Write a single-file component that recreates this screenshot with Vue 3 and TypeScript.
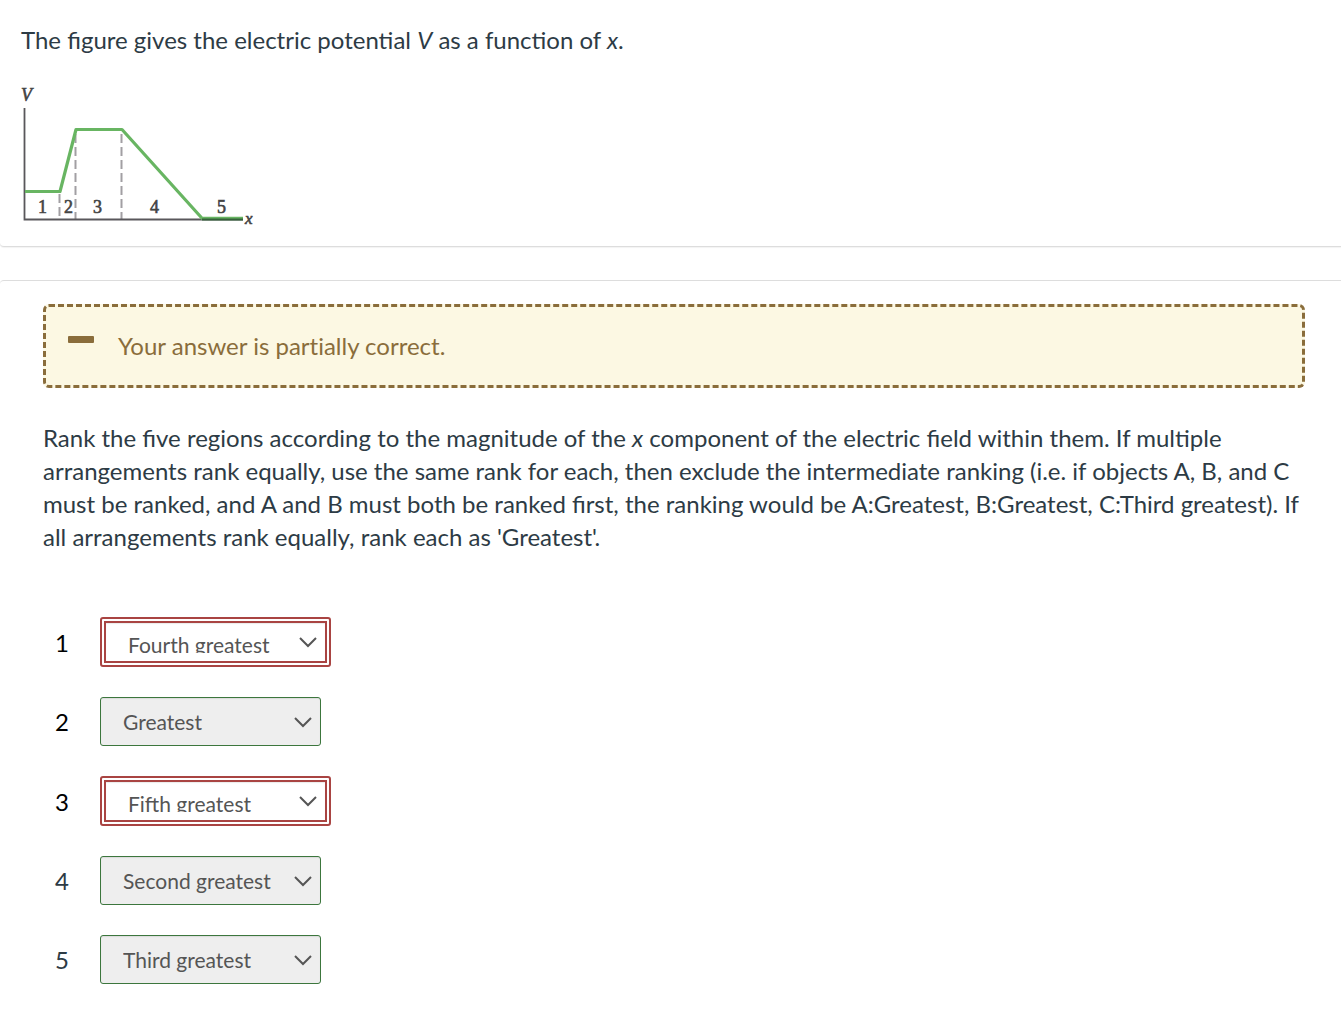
<script setup lang="ts">
import { ref } from 'vue'

interface Region {
  id: number
  rank: string
  correct: boolean
  strong: boolean
}

const ranks: string[] = [
  'Greatest',
  'Second greatest',
  'Third greatest',
  'Fourth greatest',
  'Fifth greatest',
]

const regions = ref<Region[]>([
  { id: 1, rank: 'Fourth greatest', correct: false, strong: true },
  { id: 2, rank: 'Greatest', correct: true, strong: true },
  { id: 3, rank: 'Fifth greatest', correct: false, strong: true },
  { id: 4, rank: 'Second greatest', correct: true, strong: false },
  { id: 5, rank: 'Third greatest', correct: true, strong: false },
])
</script>

<template>
  <main class="question">
    <section class="card stem">
      <p>The figure gives the electric potential <em>V</em> as a function of <em>x</em>.</p>
      <svg class="graph" width="240" height="144" viewBox="0 0 240 144" role="img" aria-label="Graph of V against x">
        <g class="divider">
          <path d="M38.500 110V135" />
          <path d="M54.500 50V135" />
          <path d="M100.500 50V135" />
        </g>
        <path class="axis" d="M3.500 24V135.500H222" />
        <path class="curve" d="M4 107.500H39L55 45.500H101L181 134.300H222" />
        <path class="axis faint" d="M181 135.500H222" />
        <g class="label">
          <text class="var" x="0" y="17">V</text>
          <text x="17" y="129">1</text>
          <text x="43" y="129">2</text>
          <text x="72" y="129">3</text>
          <text x="129" y="129">4</text>
          <text x="196" y="129">5</text>
          <text class="var small" x="224" y="140">x</text>
        </g>
      </svg>
    </section>

    <section class="card answer">
      <div class="notice" role="status">
        <span class="dash" aria-hidden="true"></span>
        <span>Your answer is partially correct.</span>
      </div>
      <p class="prompt">
        Rank the five regions according to the magnitude of the <em>x</em> component of the electric
        field within them. If multiple arrangements rank equally, use the same rank for each, then
        exclude the intermediate ranking (i.e. if objects A, B, and C must be ranked, and A and B
        must both be ranked first, the ranking would be A:Greatest, B:Greatest, C:Third greatest).
        If all arrangements rank equally, rank each as 'Greatest'.
      </p>
      <div class="rows">
        <div v-for="region in regions" :key="region.id" class="row">
          <label :for="`region-${region.id}`" :class="{ strong: region.strong }">{{ region.id }}</label>
          <select
            :id="`region-${region.id}`"
            v-model="region.rank"
            :class="region.correct ? 'right' : 'wrong'"
            :disabled="region.correct"
          >
            <option v-for="rank in ranks" :key="rank" :value="rank">{{ rank }}</option>
          </select>
        </div>
      </div>
    </section>
  </main>
</template>

<style>
body {
  margin: 0;
  background: #fff;
}
</style>

<style scoped>
.question {
  color: #2d3b45;
  font-family: Lato, "Liberation Sans", sans-serif;
  font-size: 24px;
  line-height: 33px;
}

p {
  margin: 0;
}

.card {
  background: #fff;
}

.stem {
  padding: 23px 21px 18px;
  border-bottom: 1px solid #ddd;
  border-radius: 0 0 0 4px;
  box-shadow: 0 1px 1px rgba(0, 0, 0, 0.05);
}

.graph {
  display: block;
  margin-top: 28px;
}

.axis {
  fill: none;
  stroke: #59575b;
  stroke-width: 1.8;
}

.faint {
  stroke: #35623a;
}

.curve {
  fill: none;
  stroke: #68b562;
  stroke-width: 3.2;
  stroke-linejoin: round;
}

.divider {
  fill: none;
  stroke: #a29fa3;
  stroke-width: 2;
  stroke-dasharray: 9 4;
}

.label {
  fill: #444;
  stroke: #444;
  stroke-width: 0.6;
  font-family: "Liberation Serif", serif;
  font-size: 18px;
}

.var {
  font-style: italic;
}

.small {
  font-size: 17px;
}

.answer {
  margin-top: 33px;
  padding: 23px 36px 38px 43px;
  border-top: 1px solid #ddd;
  border-radius: 4px 0 0 0;
}

.notice {
  display: flex;
  align-items: center;
  gap: 24px;
  box-sizing: border-box;
  min-height: 84px;
  padding: 0 22px 2px;
  border: 3px dashed #8a6d3b;
  border-radius: 6px;
  background: #fcf8e3;
  color: #8a6d3b;
  font-variant-ligatures: none;
}

.dash {
  width: 26px;
  height: 7px;
  margin-bottom: 12px;
  border-radius: 1px;
  background: #8a6d3b;
}

.prompt {
  margin-top: 33px;
}

.rows {
  display: flex;
  flex-direction: column;
  gap: 30px;
  margin-top: 64px;
  padding-left: 12px;
}

.row {
  display: flex;
  align-items: center;
}

label {
  width: 45px;
}

.strong {
  color: #000;
}

select {
  appearance: none;
  box-sizing: border-box;
  margin: 0;
  padding: 8px 22px;
  border-radius: 3px;
  background: #fff url("data:image/svg+xml,%3Csvg xmlns='http://www.w3.org/2000/svg' width='18' height='12' fill='none' stroke='%23555' stroke-width='2'%3E%3Cpath d='M1 2L9 10L17 2'/%3E%3C/svg%3E") no-repeat right 8px center;
  box-shadow: inset 0 1px 1px rgba(0, 0, 0, 0.08);
  color: #555;
  font-family: inherit;
  font-size: 21px;
  line-height: 27px;
  opacity: 1;
}

.wrong {
  width: 231px;
  height: 50px;
  border: 6px double #a94442;
}

.right {
  width: 221px;
  height: 49px;
  border: 1px solid #3c763d;
  background-color: #eee;
}
</style>
